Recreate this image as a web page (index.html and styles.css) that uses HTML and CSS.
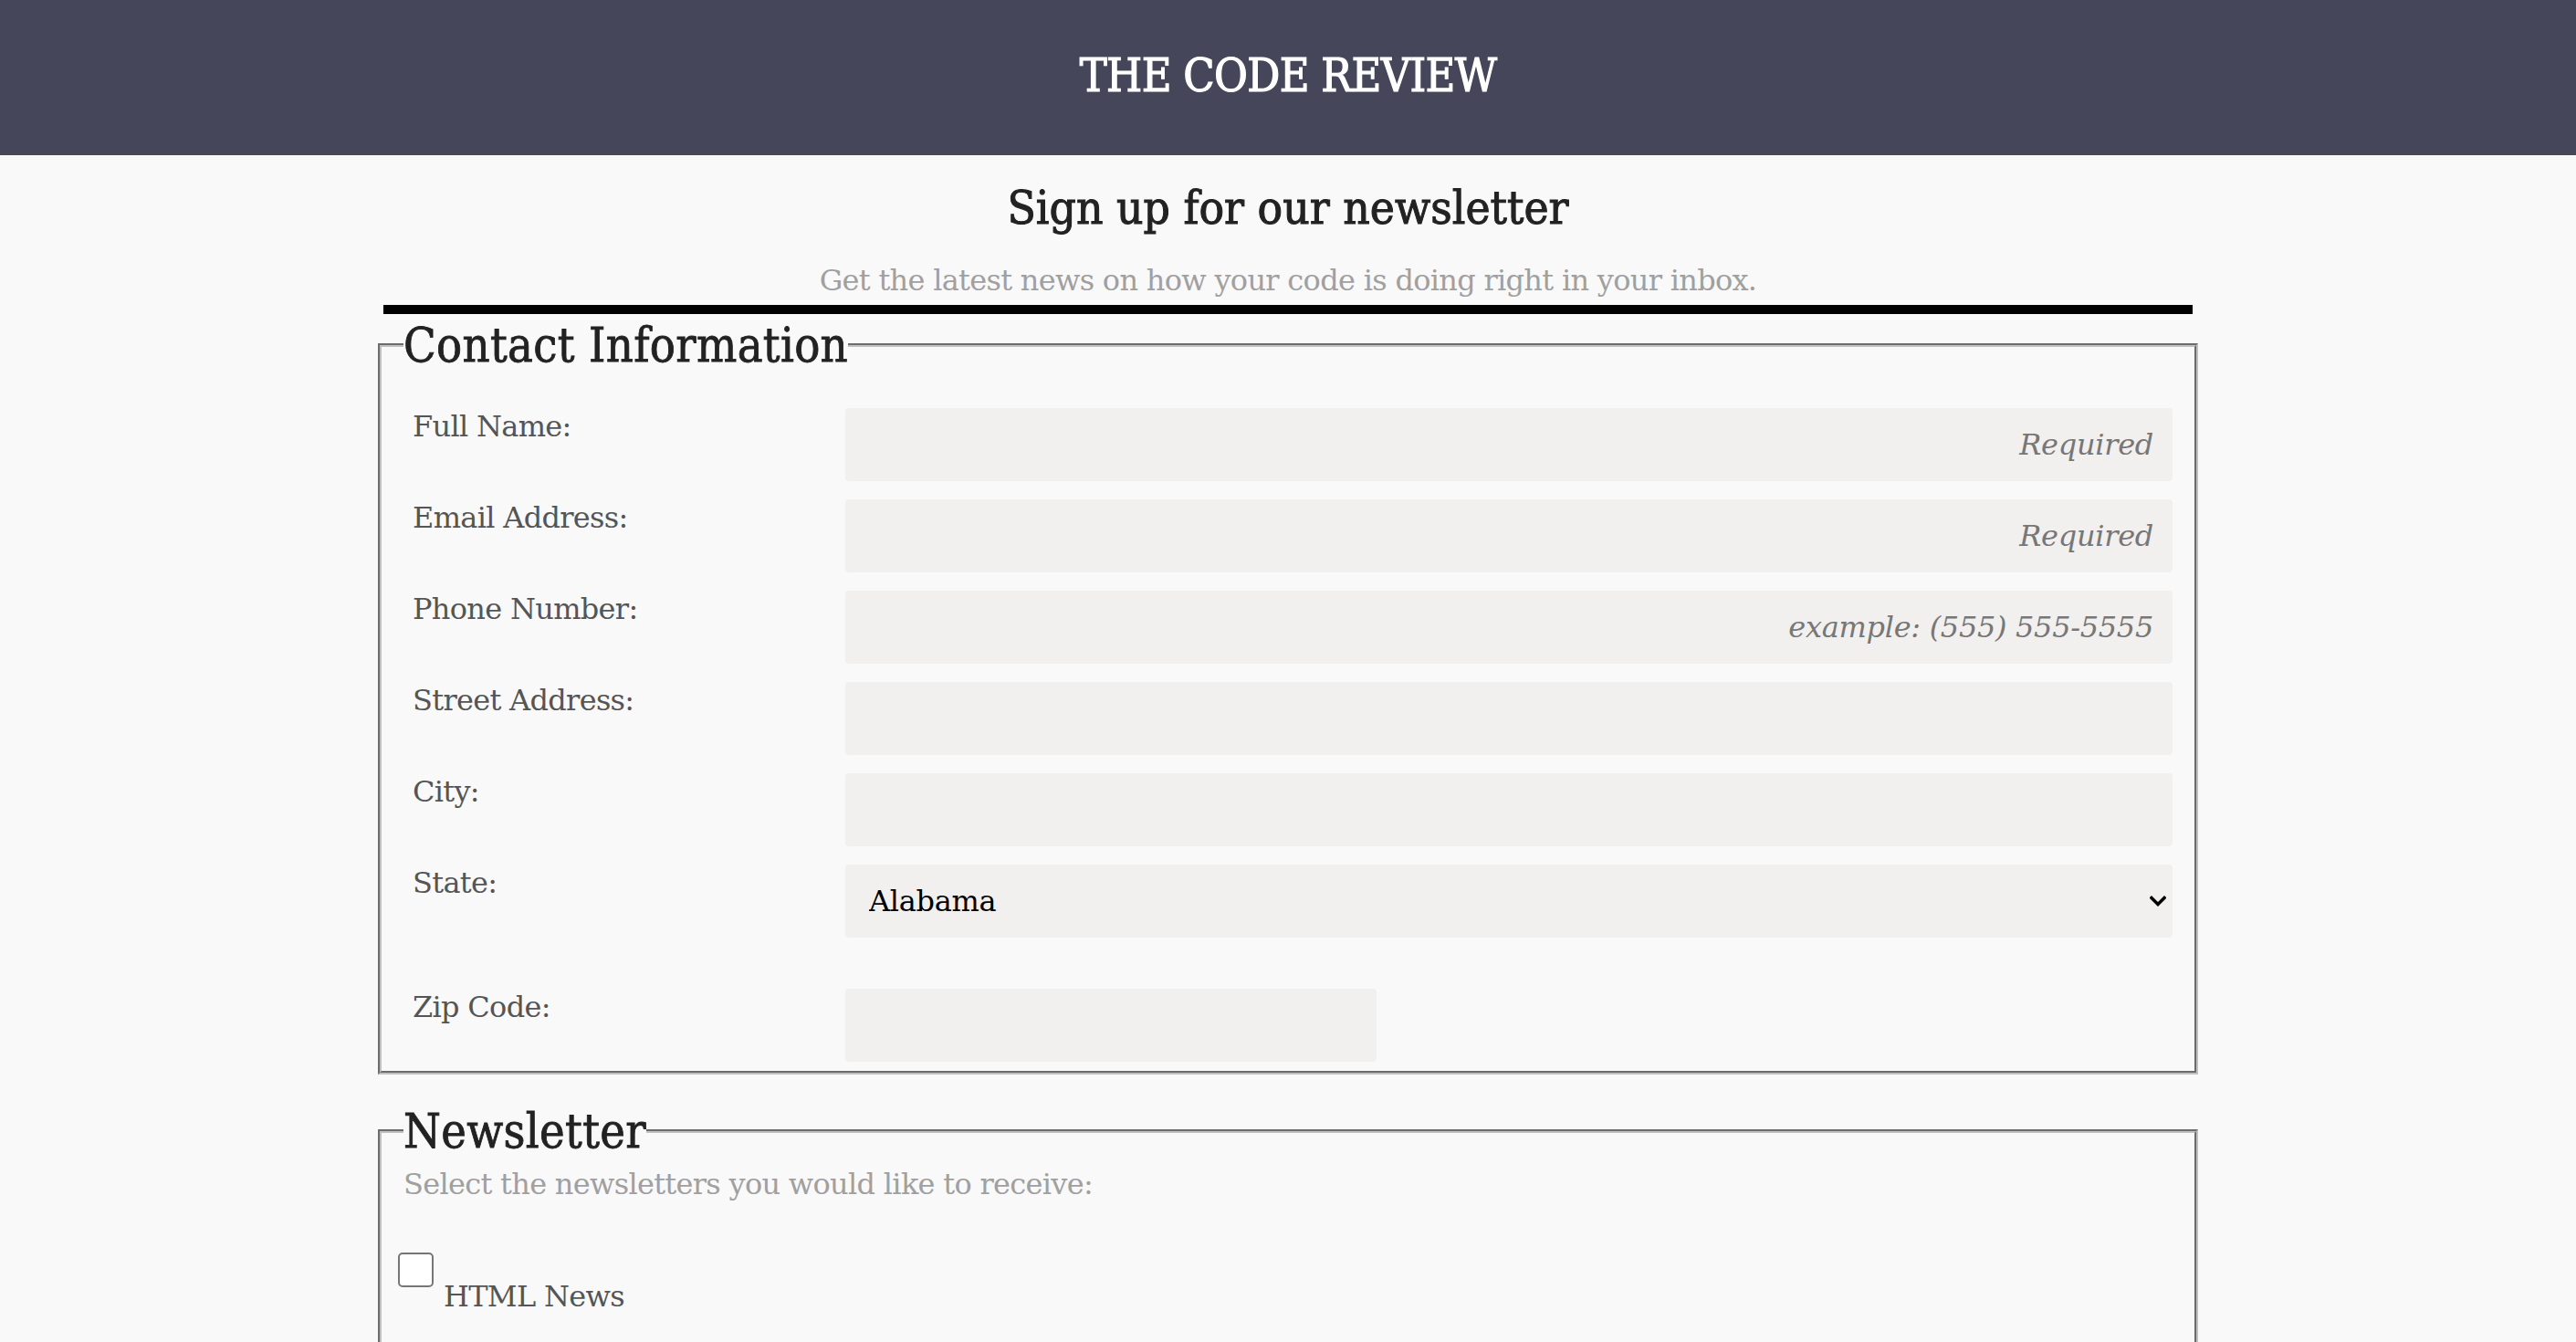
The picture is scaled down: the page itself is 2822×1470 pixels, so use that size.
FILE: index.html
```html
<!DOCTYPE html>
<html lang="en">
<head>
<meta charset="utf-8">
<title>The Code Review – Newsletter Sign Up</title>
<link rel="stylesheet" href="styles.css">
</head>
<body>
<header class="site-header">
  <h1 class="site-title">THE CODE REVIEW</h1>
</header>
<main class="page">
  <h2 class="page-title">Sign up for our newsletter</h2>
  <p class="page-intro">Get the latest news on how your code is doing right in your inbox.</p>
  <hr class="divider">
  <form class="signup">
    <fieldset class="group">
      <legend class="group-title">Contact Information</legend>
      <div class="rows">
        <div class="row">
          <label class="row-label" for="name">Full Name:</label>
          <input class="field" id="name" type="text" placeholder="Required">
        </div>
        <div class="row">
          <label class="row-label" for="email">Email Address:</label>
          <input class="field" id="email" type="email" placeholder="Required">
        </div>
        <div class="row">
          <label class="row-label" for="phone">Phone Number:</label>
          <input class="field" id="phone" type="tel" placeholder="example: (555) 555-5555">
        </div>
        <div class="row">
          <label class="row-label" for="street">Street Address:</label>
          <input class="field" id="street" type="text">
        </div>
        <div class="row">
          <label class="row-label" for="city">City:</label>
          <input class="field" id="city" type="text">
        </div>
        <div class="row">
          <label class="row-label" for="state">State:</label>
          <div class="select-wrap">
            <select class="field field-select" id="state">
              <option>Alabama</option>
              <option>Alaska</option>
              <option>Arizona</option>
              <option>Arkansas</option>
              <option>California</option>
            </select>
            <svg class="select-arrow" width="18" height="12" viewBox="0 0 18 12" aria-hidden="true">
              <path d="M2 2.5 L9 9.5 L16 2.5" fill="none" stroke="#000" stroke-width="3.4" stroke-linecap="square" stroke-linejoin="miter"/>
            </svg>
          </div>
        </div>
        <div class="row row-zip">
          <label class="row-label" for="zip">Zip Code:</label>
          <input class="field field-zip" id="zip" type="text">
        </div>
      </div>
    </fieldset>
    <fieldset class="group group-news">
      <legend class="group-title">Newsletter</legend>
      <p class="group-hint">Select the newsletters you would like to receive:</p>
      <div class="check-item">
        <input class="check" id="html" type="checkbox">
        <label class="check-label" for="html">HTML News</label>
      </div>
      <div class="check-item">
        <input class="check" id="css" type="checkbox">
        <label class="check-label" for="css">CSS News</label>
      </div>
      <div class="check-item">
        <input class="check" id="js" type="checkbox">
        <label class="check-label" for="js">JavaScript News</label>
      </div>
    </fieldset>
  </form>
</main>
</body>
</html>
```
FILE: styles.css
```css
* {
  box-sizing: border-box;
}

html, body {
  margin: 0;
  padding: 0;
  background: #f9f9f9;
}

body {
  font-family: "DejaVu Serif", "Liberation Serif", serif;
  font-size: 32px;
  letter-spacing: -0.7px;
  color: #555555;
}

.site-header {
  height: 170px;
  background: #454659;
  display: flex;
  align-items: center;
  justify-content: center;
  padding-bottom: 4px;
}

.site-title {
  margin: 0;
  color: #ffffff;
  font-family: "DejaVu Serif Condensed", "DejaVu Serif", serif;
  font-stretch: condensed;
  font-size: 50px;
  font-weight: normal;
  letter-spacing: -0.7px;
  line-height: 60px;
  -webkit-text-stroke: 1.2px #ffffff;
}

.page {
  width: 1998px;
  margin: 0 auto;
}

.page-title {
  margin: 28px 0 0;
  text-align: center;
  color: #222222;
  font-family: "DejaVu Serif Condensed", "DejaVu Serif", serif;
  font-stretch: condensed;
  font-size: 51px;
  font-weight: normal;
  letter-spacing: 0;
  line-height: 60px;
  -webkit-text-stroke: 1px #222222;
}

.page-intro {
  margin: 29px 0 0;
  text-align: center;
  color: #a0a0a0;
  font-size: 32px;
  line-height: 40px;
}

.divider {
  margin: 7px 8px 0;
  height: 10px;
  border: 0;
  background: #000000;
}

.signup {
  margin: 0;
}

.group {
  margin: 4px 2px 0;
  padding: 0 24px 10px;
  border: 4px groove #c0c0c0;
  min-width: 0;
}

.group-title {
  padding: 0;
  color: #222222;
  font-family: "DejaVu Serif Condensed", "DejaVu Serif", serif;
  font-stretch: condensed;
  font-size: 52px;
  letter-spacing: 0.3px;
  line-height: 60px;
  -webkit-text-stroke: 0.8px #222222;
}

.rows {
  margin-top: 39px;
  display: flex;
  flex-direction: column;
  gap: 20px;
}

.row {
  display: grid;
  grid-template-columns: 484px 1fr;
  align-items: start;
}

.row-zip {
  margin-top: 36px;
}

.row-label {
  padding-left: 10px;
  line-height: 40px;
}

.field {
  display: block;
  height: 80px;
  width: 100%;
  border: 0;
  border-radius: 4px;
  background: #f1f0ee;
  font-family: "DejaVu Serif", "Liberation Serif", serif;
  font-size: 32px;
  letter-spacing: -0.3px;
  color: #000000;
  padding: 0 21px 0 28px;
  text-align: right;
}

.field::placeholder {
  color: #777777;
  font-style: italic;
}

.select-wrap {
  position: relative;
}

.field-select {
  appearance: none;
  -webkit-appearance: none;
  text-align: left;
  padding-left: 26px;
}

.select-arrow {
  position: absolute;
  right: 7px;
  top: 34px;
  pointer-events: none;
}

.field-zip {
  width: 582px;
}

.group-news {
  margin-top: 32px;
}

.group-hint {
  margin: 8px 0 0;
  color: #a0a0a0;
  line-height: 40px;
}

.check-item {
  display: flex;
  align-items: flex-start;
  margin-top: 55px;
}

.check {
  appearance: none;
  -webkit-appearance: none;
  margin: 0 11px 0 -6px;
  width: 39px;
  height: 38px;
  border: 2.5px solid #767676;
  border-radius: 5px;
  background: #ffffff;
}

.check-label {
  margin-top: 28px;
  line-height: 40px;
}
```
